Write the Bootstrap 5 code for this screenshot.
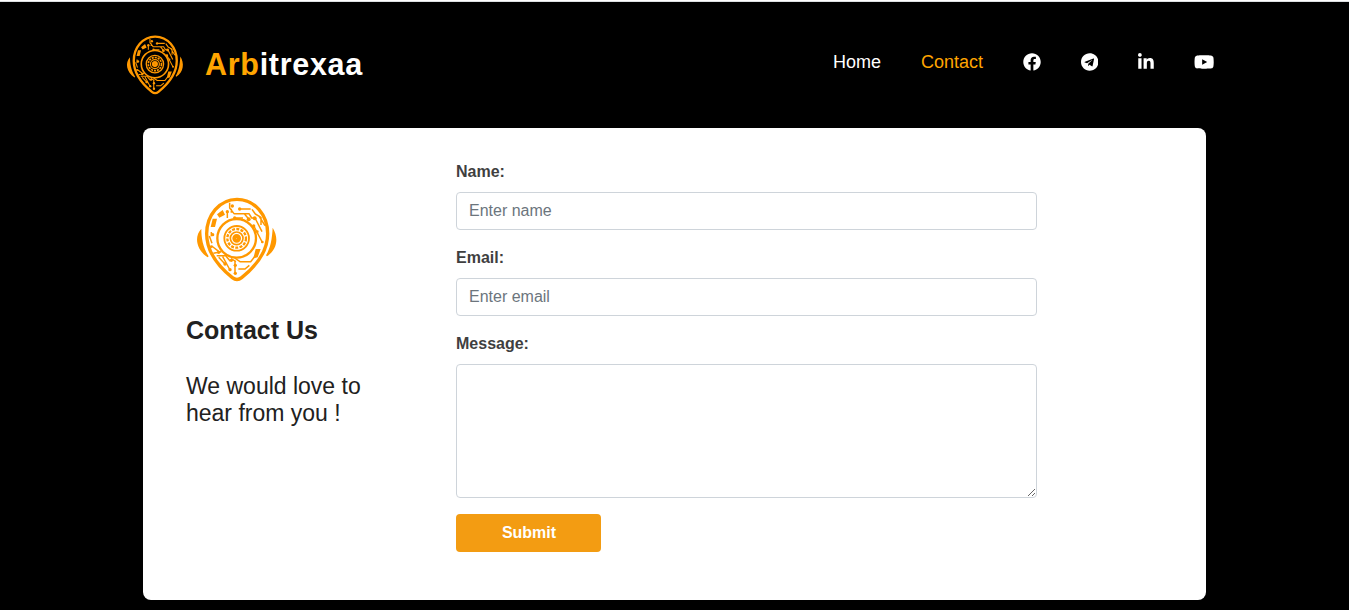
<!DOCTYPE html>
<html lang="en">
<head>
<meta charset="utf-8">
<meta name="viewport" content="width=device-width, initial-scale=1">
<title>Arbitrexaa - Contact</title>
<link href="https://cdn.jsdelivr.net/npm/bootstrap@5.3.0/dist/css/bootstrap.min.css" rel="stylesheet">
<style>
  body { font-family: "Liberation Sans", Arial, sans-serif; background: #fff; color: #212529; overflow: hidden; }
  .page { height: 609px; background: #000; border-top: 1px solid #dcdfe1; margin: 1px 1px 0 0; }
  .topbar { height: 126px; padding: 28px 135px 0 122px; }
  .brand-name { font-size: 30.5px; font-weight: 700; letter-spacing: .7px; line-height: 36px; margin: 16px 0 0 16px; color: #fff; }
  .accent { color: #ffa500; }
  .menu { gap: 40px; font-size: 18px; line-height: 27px; margin-top: 18px; }
  .menu a { color: #fff; text-decoration: none; display: flex; align-items: center; height: 27px; }
  .menu a.menu-text { padding: 2px 0 0 .5px; margin-right: -.5px; }
  .menu a.active { color: #ffa500; }
  .menu svg { height: 18px; fill: #fff; }
  .contact-card { width: 1063px; height: 472px; margin-left: 143px; border-radius: 8px; background: #fff; }
  .intro { width: 313px; padding: 62px 0 0 43px; }
  .intro svg { margin-left: 4px; }
  .intro h2 { font-size: 25px; font-weight: 700; line-height: 30px; margin: 30px 0 0; color: #212121; }
  .intro p { font-size: 23px; line-height: 27px; margin: 28px 0 0; width: 200px; color: #212121; }
  .contact-form { width: 581px; padding-top: 32px; }
  .form-label { font-weight: 700; color: #3f3f3f; display: block; line-height: 24px; }
  .form-control { border-color: #ced4da; border-radius: 4px; height: 38px; }
  .form-control::placeholder { color: #6c757d; }
  textarea.form-control { height: 134px; }
  .btn-send { width: 145px; height: 38px; background: #f39c12; color: #fff; font-weight: 700; border: 0; border-radius: 4px; padding-left: 13px; }
</style>
</head>
<body>
<svg width="0" height="0" class="d-none">
  <symbol id="robot" viewBox="0 0 285 285">
    <g fill="none" stroke="#ff9800" stroke-linejoin="round">
      <path stroke-width="10" d="M141 28C88 28 50 76 50 131c0 51 31 95 77 132q14 11 28 0c46-37 78-81 78-132C233 76 195 28 141 28z"/>
      <circle cx="140" cy="145" r="58" stroke-width="7"/>
      <circle cx="140" cy="145" r="37" stroke-width="5.5"/>
      <circle cx="140" cy="145" r="28" stroke-width="7" stroke-dasharray="9 4"/>
      <circle cx="140" cy="145" r="19" stroke-width="5"/>
      <circle cx="140" cy="145" r="7" stroke-width="12"/>
      <g stroke-width="4.5">
        <path d="M119 38v16l13 17h45l8 13h10l21 41M149 57h33M124 56v12M112 64v20M135 84h24M163 71l13 16M186 58l10 14 17 10v23M190 105l28 54M207 78l18 29M58 138l8 22M64 126v13M65 168l25 19M70 190l24-5M80 197h27l14 17M86 202l19 20M98 200l22 40M123 206l15 9M134 204l16 11h32l13-16M135 213v36M145 237h20l13-11"/>
      </g>
    </g>
    <g fill="#ff9800">
      <path d="M98 60l7 14-17 9-7-10zM68 86h13l-6 25H62zM197 177h15l-9 25-13 3zM34 116c-22 23-16 63 19 86l3-3c-18-30-22-55-22-83zM248 113c18 29 15 65-17 86l-3-3c14-24 18-48 20-83z"/>
      <circle cx="112" cy="65" r="5"/><circle cx="149" cy="57" r="5"/><circle cx="127" cy="48" r="5"/><circle cx="134" cy="84" r="5"/>
      <circle cx="176" cy="88" r="6"/><circle cx="194" cy="85" r="6"/><circle cx="191" cy="108" r="5"/><circle cx="68" cy="134" r="5"/>
      <circle cx="202" cy="125" r="4"/><circle cx="217" cy="156" r="4"/><circle cx="64" cy="170" r="4"/><circle cx="86" cy="187" r="5"/>
      <circle cx="124" cy="211" r="5"/><circle cx="105" cy="222" r="5"/><circle cx="120" cy="239" r="5"/><circle cx="136" cy="226" r="5"/><circle cx="136" cy="250" r="5"/>
    </g>
  </symbol>
</svg>

<div class="page">
  <header class="topbar d-flex justify-content-between align-items-start">
    <div class="d-flex align-items-start">
      <svg width="67" height="67"><use href="#robot"/></svg>
      <div class="brand-name"><span class="accent">Arb</span>itrexaa</div>
    </div>
    <nav class="menu d-flex">
      <a href="#" class="menu-text">Home</a>
      <a href="#" class="menu-text active">Contact</a>
      <a href="#" aria-label="Facebook"><svg viewBox="0 0 512 512"><path d="M504 256C504 119 393 8 256 8S8 119 8 256c0 123.78 90.69 226.38 209.25 245V327.69h-63V256h63v-54.64c0-62.15 37-96.48 93.67-96.48 27.14 0 55.52 4.84 55.52 4.84v61h-31.28c-30.8 0-40.41 19.12-40.41 38.73V256h68.78l-11 71.69h-57.78V501C413.31 482.38 504 379.78 504 256z"/></svg></a>
      <a href="#" aria-label="Telegram"><svg viewBox="0 0 496 512"><path d="M248 8C111.033 8 0 119.033 0 256s111.033 248 248 248 248-111.033 248-248S384.967 8 248 8zm121.8 169.9l-40.7 191.8c-3 13.6-11.1 16.9-22.4 10.5l-62-45.7-29.9 28.8c-3.3 3.3-6.1 6.1-12.5 6.1l4.4-63.1 114.9-103.8c5-4.4-1.1-6.9-7.7-2.5l-142 89.4-61.2-19.1c-13.3-4.2-13.6-13.3 2.8-19.7l239.1-92.2c11.1-4 20.8 2.7 17.2 19.5z"/></svg></a>
      <a href="#" aria-label="LinkedIn"><svg viewBox="0 0 448 512"><path d="M100.28 448H7.4V148.9h92.88zM53.79 108.1C24.09 108.1 0 83.5 0 53.8a53.79 53.79 0 0 1 107.58 0c0 29.7-24.1 54.3-53.79 54.3zM447.9 448h-92.68V302.4c0-34.7-.7-79.2-48.29-79.2-48.29 0-55.69 37.7-55.69 76.7V448h-92.78V148.9h89.08v40.8h1.3c12.4-23.5 42.69-48.3 87.88-48.3 94 0 111.28 61.9 111.28 142.3V448z"/></svg></a>
      <a href="#" aria-label="YouTube"><svg viewBox="0 0 576 512"><path d="M549.655 124.083c-6.281-23.65-24.787-42.276-48.284-48.597C458.781 64 288 64 288 64S117.22 64 74.629 75.486c-23.497 6.322-42.003 24.947-48.284 48.597-11.412 42.867-11.412 132.305-11.412 132.305s0 89.438 11.412 132.305c6.281 23.65 24.787 41.5 48.284 47.821C117.22 448 288 448 288 448s170.78 0 213.371-11.486c23.497-6.321 42.003-24.171 48.284-47.821 11.412-42.867 11.412-132.305 11.412-132.305s0-89.438-11.412-132.305zm-317.51 213.508V175.185l142.739 81.205-142.739 81.201z"/></svg></a>
    </nav>
  </header>

  <main class="contact-card d-flex">
    <section class="intro">
      <svg class="d-block" width="95" height="95"><use href="#robot"/></svg>
      <h2>Contact Us</h2>
      <p>We would love to hear from you !</p>
    </section>
    <form class="contact-form">
      <div class="mb-3">
        <label class="form-label" for="name">Name:</label>
        <input type="text" class="form-control" id="name" placeholder="Enter name">
      </div>
      <div class="mb-3">
        <label class="form-label" for="email">Email:</label>
        <input type="email" class="form-control" id="email" placeholder="Enter email">
      </div>
      <div class="mb-3">
        <label class="form-label" for="message">Message:</label>
        <textarea class="form-control" id="message"></textarea>
      </div>
      <button type="button" class="btn btn-send">Submit</button>
    </form>
  </main>
</div>
<script src="https://cdn.jsdelivr.net/npm/bootstrap@5.3.0/dist/js/bootstrap.bundle.min.js"></script>
</body>
</html>
